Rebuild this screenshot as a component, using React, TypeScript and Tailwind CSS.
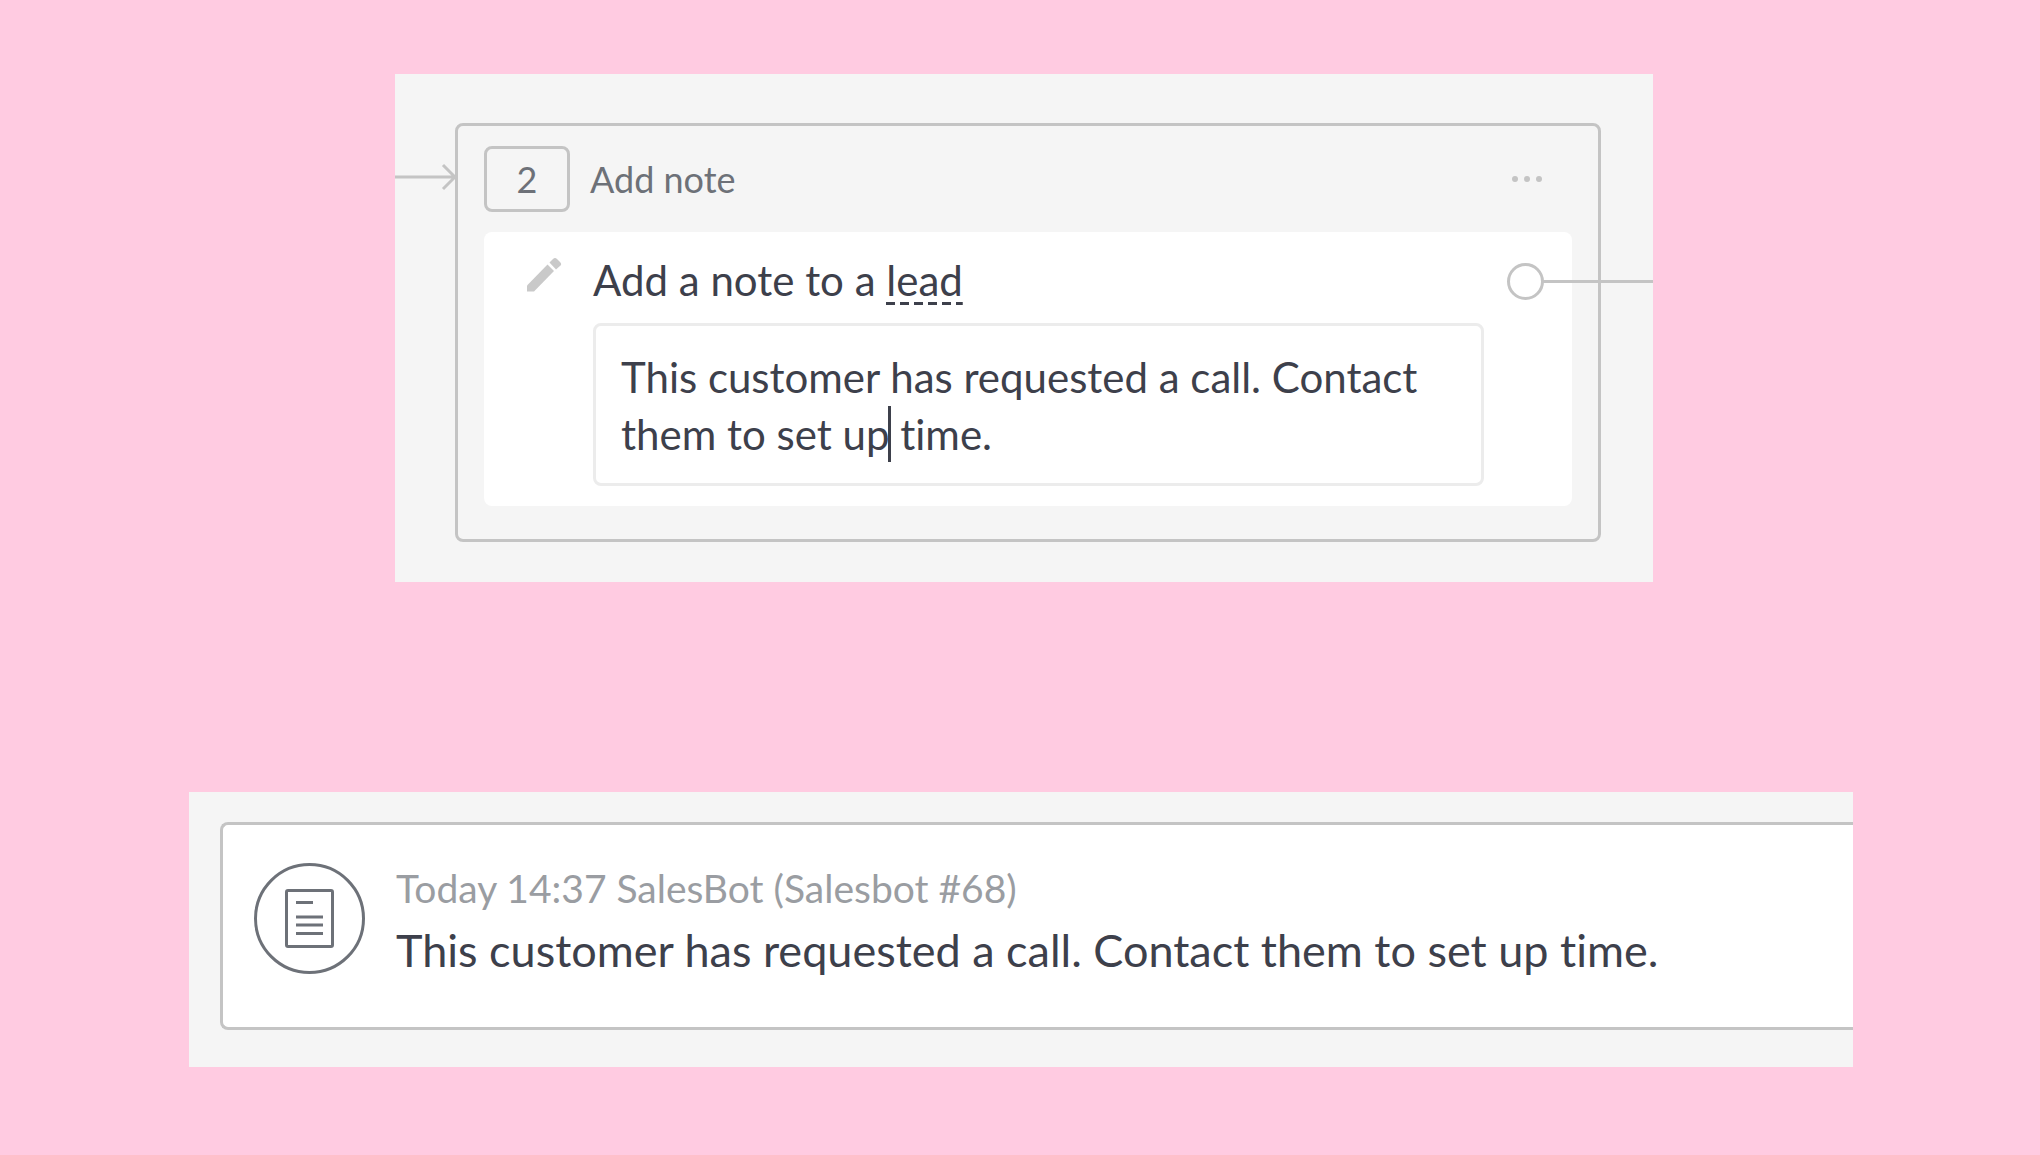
import React, { useState } from 'react';

const NOTE = 'This customer has requested a call. Contact them to set up time.';

const PencilIcon: React.FC = () => (
    <svg viewBox="0 0 36 36" className="mt-0.5 w-9 h-9 block" fill="#c9c9c9">
        <path d="M1 28.5 L21.5 7.5 L28 14 L8 34.5 L1 34.5 Z" />
        <path d="M23.5 5.5 L27 2 Q29 0 31 2 L34 5 Q36 7 34.5 8.5 L30 12.5 Z" />
    </svg>
);

const NoteIcon: React.FC = () => (
    <svg viewBox="0 0 49 59" className="w-[49px] h-[59px]" fill="none" stroke="#6d7178" strokeWidth="3">
        <rect x="1.5" y="1.5" width="46" height="56" rx="1.5" />
        <path d="M11 13.5H28M11 28H38M11 36H38M11 44.5H38" />
    </svg>
);

const BotStep: React.FC = () => {
    const [note, setNote] = useState(NOTE);

    return (
        <section className="relative ml-[206px] mr-[200px] bg-[#f5f5f5] pl-[60px] pr-[52px] pt-[49px] pb-10">
            {/* Incoming connector */}
            <svg viewBox="0 0 62 28" className="absolute left-0 top-[89px] w-[62px] h-7" fill="none" stroke="#c4c4c4" strokeWidth="3">
                <path d="M0 14H60M48 2L60 14L48 26" />
            </svg>

            <div className="rounded-lg border-3 border-[#c4c4c4] px-[26px] pt-5 pb-[33px]">
                <div className="flex items-center h-[66px]">
                    <span className="w-[86px] h-[66px] rounded-lg border-3 border-[#c4c4c4] flex items-center justify-center text-[36px] leading-none text-[#6d7178]">2</span>
                    <h2 className="ml-5 text-[36px] leading-none text-[#6d7178]">Add note</h2>
                    <button type="button" aria-label="More" className="ml-auto mr-7 flex gap-1.5 p-0.5">
                        <span className="w-1.5 h-1.5 rounded-full bg-[#c4c4c4]" />
                        <span className="w-1.5 h-1.5 rounded-full bg-[#c4c4c4]" />
                        <span className="w-1.5 h-1.5 rounded-full bg-[#c4c4c4]" />
                    </button>
                </div>

                <div className="relative mt-5 rounded-lg bg-white pl-[42px] pr-[88px] pt-[23px] pb-5 flex">
                    <PencilIcon />
                    <div className="ml-[31px] flex-1">
                        <div className="h-[50px] text-[42px] leading-[50px] text-[#3d404b]">
                            <label htmlFor="note">Add a note to a </label>
                            <button type="button" className="bg-[repeating-linear-gradient(90deg,#3d404b_0_9px,transparent_9px_14px)] bg-[length:100%_3px] bg-bottom bg-no-repeat">lead</button>
                        </div>
                        <div className="relative mt-[18px]">
                            <textarea
                                id="note"
                                rows={2}
                                value={note}
                                onChange={e => setNote(e.target.value)}
                                className="block w-full resize-none overflow-hidden rounded-lg border-3 border-[#ececec] px-[25px] pt-[23px] pb-5 text-[42px] leading-[57px] text-[#3d404b] outline-none"
                            />
                            <span className="absolute left-[295px] top-[83px] w-[3px] h-14 bg-[#3d404b]" />
                        </div>
                    </div>

                    {/* Outgoing connector */}
                    <span className="absolute right-7 top-[31px] w-[37px] h-[37px] rounded-full border-3 border-[#c4c4c4]" />
                    <span className="absolute right-[-81px] top-12 w-[110px] h-[3px] bg-[#c4c4c4]" />
                </div>
            </div>
        </section>
    );
};

const FeedNote: React.FC = () => (
    <section className="mt-[210px] bg-[#f5f5f5] pl-[31px] pt-[30px] pb-[37px]">
        <div className="rounded-l-lg border-3 border-r-0 border-[#c4c4c4] bg-white pl-[31px] pt-[38px] pb-[47px] flex">
            <div className="w-[111px] h-[111px] rounded-full border-3 border-[#6d7178] flex items-center justify-center">
                <NoteIcon />
            </div>
            <div className="ml-[31px]">
                <p className="text-[39px] leading-[50px] text-[#9a9da2]">Today 14:37 SalesBot (Salesbot #68)</p>
                <p className="mt-[7px] text-[45px] leading-[60px] text-[#3d404b]">{NOTE}</p>
            </div>
        </div>
    </section>
);

export default function App() {
    return (
        <main className="min-h-screen bg-[#ffcbe1] pl-[189px] pr-[187px] pt-[74px] pb-[87px] font-['Lato',sans-serif] [font-variant-ligatures:none]">
            <BotStep />
            <FeedNote />
        </main>
    );
}
